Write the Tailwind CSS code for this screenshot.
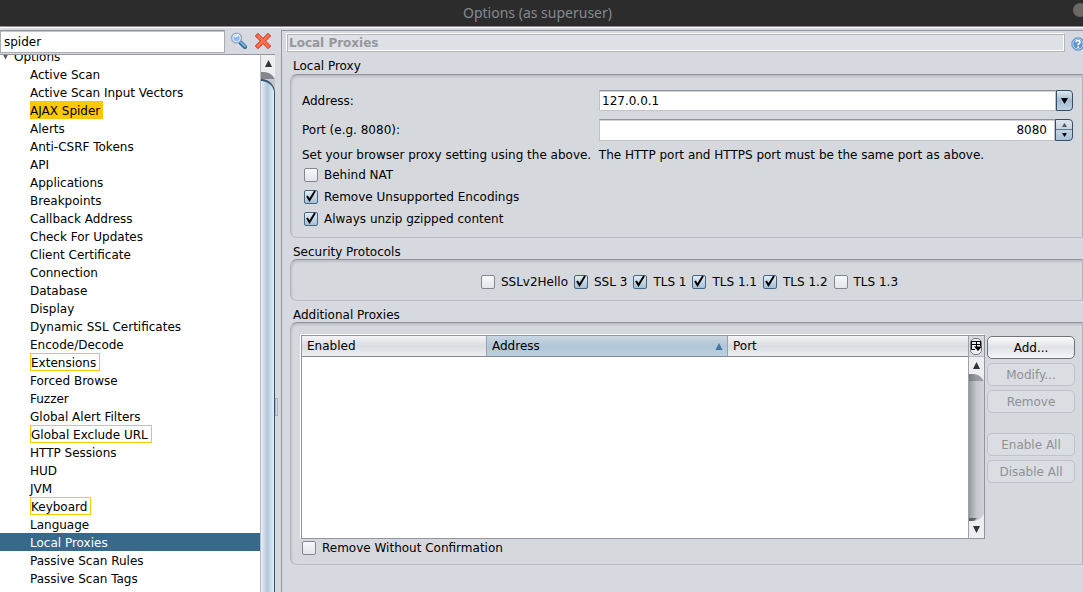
<!DOCTYPE html>
<html lang="en">
<head>
<meta charset="utf-8">
<title>Options (as superuser)</title>
<script src="https://cdn.jsdelivr.net/npm/@tailwindcss/browser@4"></script>
</head>
<body class="flex h-screen flex-col overflow-hidden bg-[#d6d9df] font-['DejaVu_Sans',sans-serif] text-[12px] leading-[18px] text-black">
<svg class="hidden">
  <symbol id="up" viewBox="0 0 8 8"><path d="M4 0L8 8H0Z" fill="currentColor"/></symbol>
  <symbol id="down" viewBox="0 0 8 8"><path d="M0 0H8L4 8Z" fill="currentColor"/></symbol>
  <symbol id="check" viewBox="0 0 12 14"><path d="M2 7L4.500 11L10 2" fill="none" stroke="#000" stroke-width="2"/></symbol>
</svg>

<header class="relative flex h-[26px] shrink-0 items-center justify-center bg-[#2c2c2c] pr-2">
  <h1 class="font-['Noto_Sans',sans-serif] text-[14px] leading-4 text-[#858a90]">Options (as superuser)</h1>
  <button aria-label="Close" class="absolute top-[3px] -right-[4px] size-[14px] rounded-full bg-[#6b6868]"></button>
</header>

<div class="flex min-h-0 grow border-t border-[#8a8b8e] shadow-[inset_0_1px_#fff]">
  <aside class="flex w-[275px] shrink-0 flex-col pt-[3px]">
    <form class="flex h-6 shrink-0 items-start">
      <input type="text" value="spider" aria-label="Search" class="h-[23px] w-[225px] border border-[#a9adb3] border-t-[#8f949c] bg-white px-[3px] shadow-[inset_0_1px_#c4c6ca]">
      <button type="button" aria-label="Find" class="ml-[5px] mt-[2px]">
        <svg class="size-[18px]" viewBox="0 0 18 18"><path d="M10 10L15 15" stroke="#2b5d90" stroke-width="4" stroke-linecap="round"/><path d="M11 10.500L15 14.500" stroke="#79b4e6" stroke-width="2" stroke-linecap="round"/><circle cx="6.500" cy="6" r="4.800" fill="#86baf5" stroke="#9da7b7" stroke-width="1.600"/><circle cx="6.500" cy="6" r="3.800" fill="none" stroke="#e9f3ff"/><path d="M4.500 5Q6 3 8 4" stroke="#fff" stroke-width="1.500" fill="none"/></svg>
      </button>
      <button type="button" aria-label="Clear" class="ml-[7px] mt-[3px]">
        <svg class="size-4" viewBox="0 0 16 16"><path d="M3 3L13 13M13 3L3 13" stroke="#cc3d20" stroke-width="4.500" stroke-linecap="square"/><path d="M3 3L13 13M13 3L3 13" stroke="#ff7050" stroke-width="2.800" stroke-linecap="square"/></svg>
      </button>
    </form>
    <div class="flex min-h-0 grow border-t border-[#9297a1]">
      <nav class="grow overflow-hidden bg-white">
        <ul class="-mt-2 leading-5">
          <li class="flex h-[18px] items-center pt-[2px] pl-[3px]"><svg class="mr-[6px] h-[6px] w-[5px] text-[#555]"><use href="#down"/></svg>Options</li>
          <li class="h-[18px] pl-[30px]"><a href="#">Active Scan</a></li>
          <li class="h-[18px] pl-[30px]"><a href="#">Active Scan Input Vectors</a></li>
          <li class="h-[18px] pl-[30px]"><a href="#" class="inline-block h-[18px] bg-[#ffc800] pr-[3px]">AJAX Spider</a></li>
          <li class="h-[18px] pl-[30px]"><a href="#">Alerts</a></li>
          <li class="h-[18px] pl-[30px]"><a href="#">Anti-CSRF Tokens</a></li>
          <li class="h-[18px] pl-[30px]"><a href="#">API</a></li>
          <li class="h-[18px] pl-[30px]"><a href="#">Applications</a></li>
          <li class="h-[18px] pl-[30px]"><a href="#">Breakpoints</a></li>
          <li class="h-[18px] pl-[30px]"><a href="#">Callback Address</a></li>
          <li class="h-[18px] pl-[30px]"><a href="#">Check For Updates</a></li>
          <li class="h-[18px] pl-[30px]"><a href="#">Client Certificate</a></li>
          <li class="h-[18px] pl-[30px]"><a href="#">Connection</a></li>
          <li class="h-[18px] pl-[30px]"><a href="#">Database</a></li>
          <li class="h-[18px] pl-[30px]"><a href="#">Display</a></li>
          <li class="h-[18px] pl-[30px]"><a href="#">Dynamic SSL Certificates</a></li>
          <li class="h-[18px] pl-[30px]"><a href="#">Encode/Decode</a></li>
          <li class="h-[18px] pl-[30px]"><a href="#" class="inline-block h-[18px] border border-[#ffc800] pr-[3px] leading-[18px]">Extensions</a></li>
          <li class="h-[18px] pl-[30px]"><a href="#">Forced Browse</a></li>
          <li class="h-[18px] pl-[30px]"><a href="#">Fuzzer</a></li>
          <li class="h-[18px] pl-[30px]"><a href="#">Global Alert Filters</a></li>
          <li class="h-[18px] pl-[30px]"><a href="#" class="inline-block h-[18px] border border-[#ffc800] pr-[3px] leading-[18px]">Global Exclude URL</a></li>
          <li class="h-[18px] pl-[30px]"><a href="#">HTTP Sessions</a></li>
          <li class="h-[18px] pl-[30px]"><a href="#">HUD</a></li>
          <li class="h-[18px] pl-[30px]"><a href="#">JVM</a></li>
          <li class="h-[18px] pl-[30px]"><a href="#" class="inline-block h-[18px] border border-[#ffc800] pr-[3px] leading-[18px]">Keyboard</a></li>
          <li class="h-[18px] pl-[30px]"><a href="#">Language</a></li>
          <li class="h-[18px] bg-[#39698a] pl-[30px] text-white"><a href="#">Local Proxies</a></li>
          <li class="h-[18px] pl-[30px]"><a href="#">Passive Scan Rules</a></li>
          <li class="h-[18px] pl-[30px]"><a href="#">Passive Scan Tags</a></li>
        </ul>
      </nav>
      <div class="flex w-[15px] shrink-0 flex-col overflow-hidden border-l border-[#b4b9c2] bg-[#c5c7cc]">
        <button aria-label="Scroll up" class="h-6 shrink-0"><svg class="size-full" viewBox="0 0 14 24"><path d="M0 17H3Q10 17 14 24H0Z" fill="#85878b"/><path d="M0 0H14V24Q10 17 4 17H0Z" fill="#eceef0"/><path d="M7.500 5L11 12H4Z" fill="#333"/></svg></button>
        <div class="grow rounded-tr-[14px] border-t-2 border-r border-[#2f536f] bg-linear-to-r from-[#e9eef4] via-[#b2c7da] to-[#dff1fb]"></div>
      </div>
    </div>
  </aside>

  <div class="flex w-[6px] shrink-0 items-center pt-[194px]"><div class="h-[18px] w-[3px] border border-[#aeb2ba]"></div></div>

  <main class="mt-[3px] min-w-0 grow border-t border-l border-[#9297a1] pl-1">
    <div class="flex items-start pt-[2px]">
      <h2 class="h-[19px] grow border border-t-white border-r-[#b5b5b5] border-b-[#b5b5b5] border-l-white bg-[#dee1e5] pl-[2px] leading-[18px] font-bold text-[#96989c] shadow-[inset_1px_1px_#b5b5b5,inset_-1px_-1px_#fff]">Local Proxies</h2>
      <button aria-label="Help" class="-mr-[2px] ml-[6px] mt-[4px]">
        <svg class="size-[14px]" viewBox="0 0 14 14"><circle cx="7" cy="7" r="6.500" fill="#3d76b8" stroke="#8eb0d8"/><circle cx="7" cy="7" r="5.200" fill="#6195d0" stroke="#dcecff" stroke-width=".8"/><path d="M5 5.200Q5.200 3.500 7 3.500Q9 3.500 9 5.200Q9 6.300 7.200 7.200V8.300" stroke="#fff" stroke-width="1.700" fill="none"/><circle cx="7.200" cy="10.300" r="1" fill="#fff"/></svg>
      </button>
    </div>

    <section class="pl-1">
      <h3 class="mt-[5px] h-[17px] pl-[3px]">Local Proxy</h3>
      <div class="h-[164px] rounded-l-[7px] border border-x-[#b1b4b9] border-t-[#909399] border-b-[#b9bcc2] bg-[#d5d8dd] pt-[15px] pr-[9px] pl-[11px] shadow-[inset_1px_2px_2px_#bdc0c6]">
        <div class="flex h-[21px] items-center">
          <label for="address" class="w-[297px] shrink-0">Address:</label>
          <input id="address" type="text" value="127.0.0.1" class="h-[21px] min-w-0 grow border border-[#c0c2c5] border-t-[#8f949c] bg-white px-[2px] shadow-[inset_0_1px_#d0d2d5]">
          <button aria-label="Show addresses" class="flex h-[21px] w-[17px] items-center justify-center rounded-r-[4px] border border-[#345069] bg-linear-to-b from-[#e2eaf1] via-[#a4bace] to-[#bdd2e4]"><svg class="h-[6px] w-[7px]" preserveAspectRatio="none" viewBox="0 0 8 8"><path d="M0 0H8L4 8Z"/></svg></button>
        </div>
        <div class="mt-2 flex h-[22px] items-center">
          <label for="port" class="w-[297px] shrink-0">Port (e.g. 8080):</label>
          <input id="port" type="text" value="8080" class="h-[22px] min-w-0 grow border border-[#c0c2c5] border-t-[#8f949c] bg-white px-[7px] text-right shadow-[inset_0_1px_#d0d2d5]">
          <div class="flex h-[22px] w-[18px] flex-col rounded-r-[4px] border border-[#345069] bg-linear-to-b from-[#dfe6ed] to-[#a9c1d6]">
            <button aria-label="Increase" class="flex h-[10px] items-center justify-center border-b border-[#5b7890]"><svg class="h-1 w-[5px]" preserveAspectRatio="none" viewBox="0 0 8 8"><path d="M4 0L8 8H0Z" fill="#555"/></svg></button>
            <button aria-label="Decrease" class="flex h-[10px] items-center justify-center"><svg class="h-1 w-[5px]" preserveAspectRatio="none" viewBox="0 0 8 8"><path d="M0 0H8L4 8Z"/></svg></button>
          </div>
        </div>
        <p class="mt-[5px] h-[18px] whitespace-pre">Set your browser proxy setting using the above.  The HTTP port and HTTPS port must be the same port as above.</p>
        <div class="flex flex-col pl-[2px]">
          <label class="flex h-[22px] items-center gap-[6px]"><input type="checkbox" class="size-[14px] appearance-none rounded-[2px] border border-[#83878f] bg-linear-to-b from-[#f8f8fa] to-[#e3e5ea]">Behind NAT</label>
          <label class="flex h-[22px] items-center gap-[6px]"><span class="relative size-[14px]"><input type="checkbox" checked class="block size-[14px] appearance-none rounded-[2px] border border-[#456580] bg-linear-to-b from-[#e5edf4] to-[#a5bfd5]"><svg class="pointer-events-none absolute -top-px left-px h-[14px] w-3"><use href="#check"/></svg></span>Remove Unsupported Encodings</label>
          <label class="flex h-[22px] items-center gap-[6px]"><span class="relative size-[14px]"><input type="checkbox" checked class="block size-[14px] appearance-none rounded-[2px] border border-[#456580] bg-linear-to-b from-[#e5edf4] to-[#a5bfd5]"><svg class="pointer-events-none absolute -top-px left-px h-[14px] w-3"><use href="#check"/></svg></span>Always unzip gzipped content</label>
        </div>
      </div>
    </section>

    <section class="pl-1">
      <h3 class="mt-[5px] h-4 pl-[3px]">Security Protocols</h3>
      <div class="flex h-[42px] items-center justify-center gap-[6px] rounded-l-[7px] border border-x-[#b1b4b9] border-t-[#909399] border-b-[#b9bcc2] bg-[#d5d8dd] pt-1 pl-[6px] shadow-[inset_1px_2px_2px_#bdc0c6]">
        <label class="flex items-center gap-[6px]"><input type="checkbox" class="size-[14px] appearance-none rounded-[2px] border border-[#83878f] bg-linear-to-b from-[#f8f8fa] to-[#e3e5ea]">SSLv2Hello</label>
        <label class="flex items-center gap-[6px]"><span class="relative size-[14px]"><input type="checkbox" checked class="block size-[14px] appearance-none rounded-[2px] border border-[#456580] bg-linear-to-b from-[#e5edf4] to-[#a5bfd5]"><svg class="pointer-events-none absolute -top-px left-px h-[14px] w-3"><use href="#check"/></svg></span>SSL 3</label>
        <label class="flex items-center gap-[6px]"><span class="relative size-[14px]"><input type="checkbox" checked class="block size-[14px] appearance-none rounded-[2px] border border-[#456580] bg-linear-to-b from-[#e5edf4] to-[#a5bfd5]"><svg class="pointer-events-none absolute -top-px left-px h-[14px] w-3"><use href="#check"/></svg></span>TLS 1</label>
        <label class="flex items-center gap-[6px]"><span class="relative size-[14px]"><input type="checkbox" checked class="block size-[14px] appearance-none rounded-[2px] border border-[#456580] bg-linear-to-b from-[#e5edf4] to-[#a5bfd5]"><svg class="pointer-events-none absolute -top-px left-px h-[14px] w-3"><use href="#check"/></svg></span>TLS 1.1</label>
        <label class="flex items-center gap-[6px]"><span class="relative size-[14px]"><input type="checkbox" checked class="block size-[14px] appearance-none rounded-[2px] border border-[#456580] bg-linear-to-b from-[#e5edf4] to-[#a5bfd5]"><svg class="pointer-events-none absolute -top-px left-px h-[14px] w-3"><use href="#check"/></svg></span>TLS 1.2</label>
        <label class="flex items-center gap-[6px]"><input type="checkbox" class="size-[14px] appearance-none rounded-[2px] border border-[#83878f] bg-linear-to-b from-[#f8f8fa] to-[#e3e5ea]">TLS 1.3</label>
      </div>
    </section>

    <section class="pl-1">
      <h3 class="mt-[5px] h-4 pl-[3px]">Additional Proxies</h3>
      <div class="h-[243px] rounded-l-[7px] border border-x-[#b1b4b9] border-t-[#909399] border-b-[#b9bcc2] bg-[#d5d8dd] pt-3 pr-[7px] pl-[10px] shadow-[inset_1px_2px_2px_#bdc0c6]">
        <div class="flex items-start gap-[2px]">
          <div class="flex h-[204px] min-w-0 grow border border-[#92959b] bg-white shadow-[-1px_-1px_#fff]">
            <div class="min-w-0 grow">
              <table class="w-full table-fixed border-separate border-spacing-0">
                <thead><tr class="text-left">
                  <th class="h-[21px] w-[185px] border-r border-b border-r-[#9da0a6] border-b-[#85888e] bg-linear-to-b from-[#f4f5f7] via-[#d9dce1] to-[#eceef3] p-0 pl-[5px] leading-4 font-normal">Enabled</th>
                  <th class="h-[21px] w-[241px] border-r border-b border-r-[#9da0a6] border-b-[#85888e] bg-linear-to-b from-[#cbd8e2] via-[#b0c5d5] to-[#bbd0e0] p-0 pr-1 pl-[5px] leading-4 font-normal"><span class="flex items-center justify-between">Address<svg class="h-[7px] w-2 text-[#4475a3]"><use href="#up"/></svg></span></th>
                  <th class="h-[21px] border-b border-[#85888e] bg-linear-to-b from-[#f4f5f7] via-[#d9dce1] to-[#eceef3] p-0 pl-[5px] leading-4 font-normal">Port</th>
                </tr></thead>
                <tbody></tbody>
              </table>
            </div>
            <div class="flex w-4 shrink-0 flex-col border-l border-[#9da0a6] bg-linear-to-r from-[#96999f] via-[#c5c7cd] to-[#d2d4da]">
              <button aria-label="Choose columns" class="h-[21px] shrink-0 border-b border-[#b4b7bd] bg-[#d6d9df]"><svg class="size-full" viewBox="0 0 15 20"><rect x="1.500" y="2.500" width="11" height="16" rx="4.500" fill="#eceef2" stroke="#777a80"/><path d="M2 5.500H12M2.500 5V13.500H6M2 8.500H12M7.500 5V12M11.500 5V10" fill="none" stroke="#000"/><path d="M5 10.500H13L9 15Z"/></svg></button>
              <button aria-label="Scroll up" class="h-6 shrink-0"><svg class="size-full" viewBox="0 0 15 24"><path d="M0 16H15V24H0Z" fill="#55575b" fill-opacity=".4"/><path d="M0 0H15V24Q11 17 4 17H0Z" fill="#eceef0"/><path d="M7.500 5L11 12H4Z" fill="#333"/></svg></button>
              <div class="grow"></div>
              <button aria-label="Scroll down" class="h-6 shrink-0"><svg class="size-full" viewBox="0 0 15 24"><path d="M0 4H8L4 8H0Z" fill="#333" fill-opacity=".6"/><path d="M15 0V24H0V7H4Q11 7 15 0Z" fill="#eceef0"/><path d="M7.500 19L11 12H4Z" fill="#333"/></svg></button>
            </div>
          </div>
          <div class="flex w-[88px] shrink-0 flex-col gap-1">
            <button class="mt-[1px] h-[23px] rounded-[5px] border border-[#6f747d] bg-linear-to-b from-[#fbfbfc] via-[#dfe1e6] to-[#f5f7fb]">Add...</button>
            <button disabled class="h-[23px] rounded-[5px] border border-[#bfc2c8] bg-[#dadde2] text-[#8e9197]">Modify...</button>
            <button disabled class="h-[23px] rounded-[5px] border border-[#bfc2c8] bg-[#dadde2] text-[#8e9197]">Remove</button>
            <button disabled class="mt-4 h-[23px] rounded-[5px] border border-[#bfc2c8] bg-[#dadde2] text-[#8e9197]">Enable All</button>
            <button disabled class="h-[23px] rounded-[5px] border border-[#bfc2c8] bg-[#dadde2] text-[#8e9197]">Disable All</button>
          </div>
        </div>
        <label class="flex h-[18px] items-center gap-[6px] pl-px"><input type="checkbox" class="size-[14px] appearance-none rounded-[2px] border border-[#83878f] bg-linear-to-b from-[#f8f8fa] to-[#e3e5ea]">Remove Without Confirmation</label>
      </div>
    </section>
  </main>
</div>
</body>
</html>
